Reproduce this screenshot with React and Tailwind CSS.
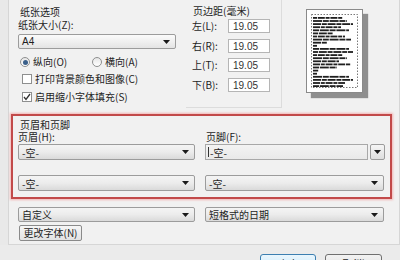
import React from "react";

const font = "font-['Noto_Sans_CJK_SC','Noto_Sans',sans-serif]";

function Arrow() {
  return (
    <svg width="7" height="4" viewBox="0 0 7 4" className="shrink-0">
      <path d="M0 0H7L3.5 4Z" fill="#1a1a1a" />
    </svg>
  );
}

function Combo({ text, className = "", light = false }) {
  return (
    <div
      className={`h-[15px] flex items-center justify-between pl-[3px] pr-[5px] border border-[#9c9c9c] rounded-[2px] ${
        light
          ? "bg-[linear-gradient(#fbfbfb,#f0f0f0_50%,#e4e4e4)]"
          : "bg-[linear-gradient(#f4f4f4,#ececec_50%,#dadada)]"
      } ${className}`}
    >
      <span className="leading-[13px]">{text}</span>
      <Arrow />
    </div>
  );
}

function EditCombo({ text, className = "" }) {
  return (
    <div className={`h-[16px] flex items-stretch gap-[2px] ${className}`}>
      <div className="flex-1 flex items-center border border-[#a8a8a8] bg-[linear-gradient(#f3f3f3,#e9e9e9)] pl-[2px]">
        <span className="w-px h-[10px] bg-[#333] mr-[1px]" />
        <span className="leading-[13px]">{text}</span>
      </div>
      <div className="w-[15px] flex items-center justify-center border border-[#9c9c9c] rounded-[2px] bg-[linear-gradient(#f6f6f6,#dedede)]">
        <Arrow />
      </div>
    </div>
  );
}

function Radio({ checked }) {
  return (
    <span className="w-[10px] h-[10px] rounded-full border border-[#8e8f8f] bg-[linear-gradient(#e6e6e6,#ffffff)] flex items-center justify-center shrink-0">
      {checked && <span className="w-[5px] h-[5px] rounded-full bg-[#3a5f8a]" />}
    </span>
  );
}

function Check({ checked }) {
  return (
    <span className="w-[10px] h-[10px] border border-[#8e8f8f] bg-white flex items-center justify-center shrink-0">
      {checked && (
        <svg width="8" height="8" viewBox="0 0 8 8">
          <path d="M1 4L3 6.5L7 1" stroke="#333" strokeWidth="1.3" fill="none" />
        </svg>
      )}
    </span>
  );
}

function MarginRow({ label, className = "" }) {
  return (
    <div className={`h-[14px] flex items-center ${className}`}>
      <span className="w-[36px] leading-[12px]">{label}</span>
      <div className="w-[42px] h-[14px] border border-[#b5b5b5] bg-white flex items-center pl-[4px] font-['Liberation_Sans',sans-serif] text-[10px] text-[#333]">
        19.05
      </div>
    </div>
  );
}

function PagePreview() {
  const lines = [];
  const widths = [30, 34, 40, 28, 36, 20, 32, 38, 14, 4, 36, 40, 30, 34, 26, 38, 24, 6, 4, 36, 40, 32, 30];
  widths.forEach((w, i) => {
    const y = 7 + i * 3.1;
    let x = 6;
    let k = 0;
    while (x < 6 + w) {
      const seg = Math.min(4 + ((i * 5 + k * 3) % 6), 6 + w - x);
      lines.push(<rect key={`${i}-${k}`} x={x} y={y} width={seg} height="1.8" fill="#1f1f1f" />);
      x += seg + 0.8;
      k++;
    }
  });
  return (
    <div className="mt-[9px] ml-[24px] w-[57px] h-[84px] bg-white border border-[#8a8a8a] shadow-[5px_5px_1px_#8f8f8f]">
      <svg width="55" height="82" viewBox="0 0 55 82">
        <rect x="4.5" y="4.5" width="46" height="73" fill="none" stroke="#555" strokeWidth="0.8" strokeDasharray="1.5 1.5" />
        {lines}
      </svg>
    </div>
  );
}

export default function App() {
  return (
    <div className={`w-[400px] h-[260px] overflow-hidden bg-[#ebebeb] ${font} text-[10px] text-[#1e1e1e] flex flex-col`}>
      <div className="h-[245px] flex shrink-0">
        <div className="w-[9px] shrink-0 border-r border-[#d6d6d6] bg-[#e9e9e9]" />
        <div className="flex-1 bg-[#f1f1f1] flex flex-col border-r border-[#d6d6d6] border-b">
          {/* top */}
          <div className="h-[110px] flex pl-[9px]">
            <div className="w-[158px] flex flex-col">
              <div className="mt-[6px] pl-[2px] h-[12px] leading-[12px]">纸张选项</div>
              <div className="mt-[1px] h-[12px] leading-[12px]">纸张大小(Z):</div>
              <Combo text="A4" light className="mt-[3px] font-['Liberation_Sans',sans-serif] text-[10px]" />
              <div className="mt-[7px] h-[12px] flex items-center pl-[2px]">
                <Radio checked />
                <span className="ml-[3px] leading-[12px] w-[59px]">纵向(O)</span>
                <Radio />
                <span className="ml-[3px] leading-[12px]">横向(A)</span>
              </div>
              <div className="mt-[5px] h-[12px] flex items-center pl-[4px]">
                <Check />
                <span className="ml-[3px] leading-[12px]">打印背景颜色和图像(C)</span>
              </div>
              <div className="mt-[6px] h-[12px] flex items-center pl-[4px]">
                <Check checked />
                <span className="ml-[3px] leading-[12px]">启用缩小字体填充(S)</span>
              </div>
            </div>
            <div className="ml-[10px] w-[96px] h-[108px] pl-[6px] border-r border-b border-[#dcdcdc] flex flex-col">
              <div className="mt-[5px] h-[12px] leading-[12px] pl-[1px]">页边距(毫米)</div>
              <MarginRow label="左(L):" className="mt-[2px]" />
              <MarginRow label="右(R):" className="mt-[6px]" />
              <MarginRow label="上(T):" className="mt-[5px]" />
              <MarginRow label="下(B):" className="mt-[6px]" />
            </div>
            <PagePreview />
          </div>

          {/* header/footer red box */}
          <div className="mt-[4px] ml-[2px] w-[381px] h-[85px] border-2 border-[#c24a4a] shadow-[0_0_2px_1px_#f3b4b4] flex flex-col pl-[5px]">
            <div className="mt-[3px] pl-[2px] h-[11px] leading-[11px]">页眉和页脚</div>
            <div className="mt-[1px] h-[12px] flex leading-[12px]">
              <span className="w-[187px]">页眉(H):</span>
              <span className="pl-[1px]">页脚(F):</span>
            </div>
            <div className="mt-[1px] flex gap-[10px]">
              <Combo text="-空-" className="w-[177px] h-[16px]" />
              <EditCombo text="-空-" className="w-[180px]" />
            </div>
            <div className="mt-[15px] flex gap-[10px]">
              <Combo text="-空-" className="w-[177px] h-[16px]" />
              <Combo text="-空-" className="w-[179px] h-[16px]" />
            </div>
          </div>

          {/* below */}
          <div className="mt-[8px] pl-[9px] flex gap-[10px]">
            <Combo text="自定义" className="w-[177px]" />
            <Combo text="短格式的日期" className="w-[179px]" />
          </div>
          <div className="mt-[3px] pl-[10px]">
            <div className="w-[63px] h-[16px] border border-[#8a8a8a] rounded-[2px] bg-[linear-gradient(#f6f6f6,#e2e2e2)] flex items-center justify-center leading-[12px]">
              更改字体(N)
            </div>
          </div>
        </div>
      </div>
      <div className="flex justify-end gap-[9px] pr-[18px] mt-[9px]">
        <div className="w-[56px] h-[22px] border border-[#3c7fb1] rounded-[3px] bg-[linear-gradient(#eaf6fd,#bee6fd)] flex items-start justify-center pt-[2px] leading-[14px] text-[11px]">
          确定
        </div>
        <div className="w-[57px] h-[22px] border border-[#707070] rounded-[3px] bg-[linear-gradient(#f2f2f2,#dddddd)] flex items-start justify-center pt-[2px] leading-[14px] text-[11px]">
          取消
        </div>
      </div>
    </div>
  );
}
